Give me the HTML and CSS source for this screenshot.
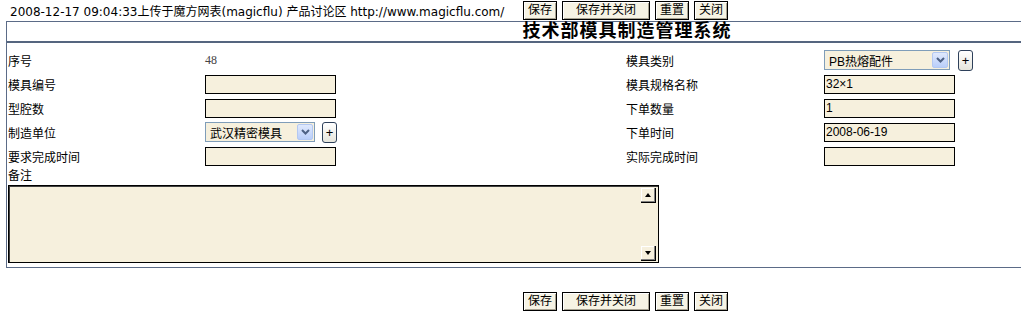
FILE: index.html
```html
<!DOCTYPE html>
<html>
<head>
    <title>技术部模具制造管理系统</title>
    <link rel="stylesheet" href="styles.css">
</head>
<body>
    <div class="topbar">
        <span class="stamp">2008-12-17 09:04:33上传于魔方网表(magicflu) 产品讨论区 http://www.magicflu.com/</span>
        <div class="actions">
            <button class="btn">保存</button>
            <button class="btn btn-wide">保存并关闭</button>
            <button class="btn">重置</button>
            <button class="btn">关闭</button>
        </div>
    </div>

    <div class="panel">
        <div class="panel-title">技术部模具制造管理系统</div>

        <div class="fields">
            <div class="label">序号</div>
            <div class="value-num">48</div>
            <div class="label">模具类别</div>
            <div class="pick">
                <div class="combo combo-wide">
                    <span class="combo-text">PB热熔配件</span>
                    <span class="combo-btn">
                        <svg width="11" height="8" viewBox="0 0 11 8"><path d="M2 2 L5.5 5.5 L9 2" fill="none" stroke="#4d6185" stroke-width="2"/></svg>
                    </span>
                </div>
                <span class="plus plus-wide">+</span>
            </div>

            <div class="label">模具编号</div>
            <div><input class="field" type="text"></div>
            <div class="label">模具规格名称</div>
            <div><input class="field" type="text" value="32×1"></div>

            <div class="label">型腔数</div>
            <div><input class="field" type="text"></div>
            <div class="label">下单数量</div>
            <div><input class="field" type="text" value="1"></div>

            <div class="label">制造单位</div>
            <div class="pick">
                <div class="combo">
                    <span class="combo-text">武汉精密模具</span>
                    <span class="combo-btn">
                        <svg width="11" height="8" viewBox="0 0 11 8"><path d="M2 2 L5.5 5.5 L9 2" fill="none" stroke="#4d6185" stroke-width="2"/></svg>
                    </span>
                </div>
                <span class="plus">+</span>
            </div>
            <div class="label">下单时间</div>
            <div><input class="field" type="text" value="2008-06-19"></div>

            <div class="label">要求完成时间</div>
            <div><input class="field" type="text"></div>
            <div class="label">实际完成时间</div>
            <div><input class="field" type="text"></div>
        </div>

        <div class="memo-label">备注</div>
        <div class="memo">
            <textarea class="memo-text"></textarea>
            <div class="memo-scroll">
                <span class="arrow arrow-up"></span>
                <span class="arrow arrow-down"></span>
            </div>
        </div>
    </div>

    <div class="actions actions-bottom">
        <button class="btn">保存</button>
        <button class="btn btn-wide">保存并关闭</button>
        <button class="btn">重置</button>
        <button class="btn">关闭</button>
    </div>
</body>
</html>
```

FILE: styles.css
```css
html, body {
    margin: 0;
    overflow: hidden;
    background: #fff;
}
body {
    font-family: "Liberation Sans", "Noto Sans CJK SC", sans-serif;
    font-size: 12px;
    color: #000;
}
.topbar {
    display: flex;
    align-items: center;
    height: 21px;
}
.stamp {
    width: 523px;
    padding-left: 10px;
    box-sizing: border-box;
    white-space: nowrap;
    font-family: "DejaVu Sans", "Noto Sans CJK SC", sans-serif;
}
.actions {
    display: flex;
    gap: 5px;
}
.actions-bottom {
    margin: 24px 0 0 523px;
}
.btn {
    height: 19px;
    padding: 0 4px;
    border: 1px solid #000;
    background: #f6f3e4;
    box-shadow: inset 1px 1px #fff, inset -1px -1px #a8a392;
    font-family: "Liberation Sans", "Noto Sans CJK SC", sans-serif;
    font-size: 12px;
    line-height: 15px;
    color: #000;
}
.btn-wide {
    width: 88px;
}
.panel {
    margin-left: 6px;
    width: 1240px;
    border: 1px solid #5b6b87;
    background: #fff;
}
.panel-title {
    height: 19px;
    line-height: 19px;
    text-align: center;
    font-size: 18px;
    font-weight: bold;
    letter-spacing: 1px;
    border-bottom: 2px solid #55657f;
}
.fields {
    display: grid;
    grid-template-columns: 197px 421px 198px 1fr;
    grid-auto-rows: 24px;
    align-items: center;
    padding: 5px 0 0 1px;
}
.value-num {
    font-family: "Liberation Serif", serif;
    color: #444;
}
.field {
    display: block;
    width: 131px;
    height: 19px;
    box-sizing: border-box;
    margin: 0;
    padding: 0 1px;
    border: 1px solid #000;
    background: #f6f0dd;
    font-family: "Liberation Sans", "Noto Sans CJK SC", sans-serif;
    font-size: 12px;
    color: #000;
}
.pick {
    display: flex;
    align-items: center;
    gap: 7px;
}
.combo {
    display: flex;
    align-items: center;
    width: 110px;
    height: 20px;
    box-sizing: border-box;
    border: 1px solid #7f9db9;
    background: #f6f0dd;
}
.combo-wide {
    width: 126px;
}
.combo-text {
    flex: 1;
    padding-left: 4px;
    white-space: nowrap;
}
.combo-btn {
    display: flex;
    align-items: center;
    justify-content: center;
    width: 16px;
    height: 16px;
    margin-right: 1px;
    box-sizing: border-box;
    border: 1px solid #b3c8f2;
    border-radius: 2px;
    background: linear-gradient(#e0e9fd, #b9cefa);
}
.plus {
    display: flex;
    align-items: center;
    justify-content: center;
    width: 15px;
    height: 21px;
    box-sizing: border-box;
    border: 1px solid #2e405a;
    border-radius: 3px;
    background: linear-gradient(#fff, #e6e5dc);
    font-size: 13px;
}
.plus-wide {
    margin-left: 1px;
}
.memo-label {
    height: 16px;
    line-height: 16px;
    padding-left: 1px;
}
.memo {
    display: flex;
    width: 651px;
    height: 78px;
    margin: 1px 0 4px 1px;
    box-sizing: border-box;
    border: 1px solid #000;
    box-shadow: inset 1px 1px #404040;
    background: #f6f0dd;
}
.memo-text {
    flex: 1;
    border: none;
    resize: none;
    background: transparent;
    outline: none;
}
.memo-scroll {
    display: flex;
    flex-direction: column;
    justify-content: space-between;
    padding: 2px 2px 1px 0;
}
.arrow {
    display: flex;
    align-items: center;
    justify-content: center;
    width: 15px;
    height: 15px;
    box-sizing: border-box;
    border-right: 1px solid #000;
    border-bottom: 1px solid #000;
    box-shadow: inset -1px -1px #808080, inset 1px 1px #fff;
}
.arrow::before {
    content: '';
    border-left: 3px solid transparent;
    border-right: 3px solid transparent;
}
.arrow-up::before {
    border-bottom: 4px solid #000;
}
.arrow-down::before {
    border-top: 4px solid #000;
}
```
